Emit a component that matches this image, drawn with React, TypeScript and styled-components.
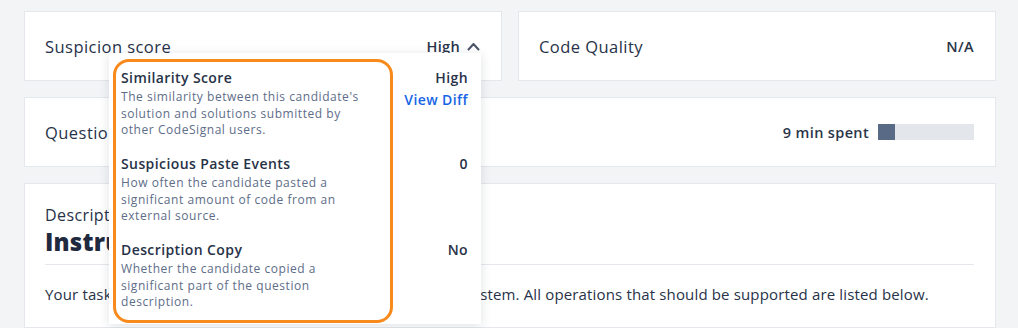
import React from "react";
import styled, { createGlobalStyle } from "styled-components";

const Global = createGlobalStyle`
  html, body { margin: 0; padding: 0; background: #f3f4f6; }
  body { font-family: "Open Sans", "Liberation Sans", sans-serif; color: #273248; }
  * { box-sizing: border-box; }
`;

const Page = styled.div`
  width: 1018px;
  height: 328px;
  overflow: hidden;
  padding: 11px 22px 0 24px;
  display: flex;
  flex-direction: column;
  gap: 16px;
`;

const TopRow = styled.div`
  display: grid;
  grid-template-columns: 1fr 1fr;
  gap: 16px;
`;

const Card = styled.div<{ $raised?: boolean }>`
  position: relative;
  z-index: ${(p) => (p.$raised ? 5 : 1)};
  background: #fff;
  border: 1px solid #e4e7eb;
`;

const RowCard = styled(Card)`
  height: 70px;
  display: flex;
  align-items: center;
  justify-content: space-between;
  padding: 0 21px 0 20px;
`;

const Label = styled.div`
  font-size: 16.5px;
  font-weight: 500;
  color: #273248;
  letter-spacing: 0.45px;
`;

const Value = styled.div<{ $gap?: number }>`
  display: flex;
  align-items: center;
  gap: ${(p) => p.$gap ?? 7}px;
  font-size: 14.5px;
  font-weight: 600;
  letter-spacing: 0.35px;
  color: #2a3549;
`;

const Bar = styled.div`
  width: 96px;
  height: 16px;
  background: #e3e6ea;
  display: flex;
`;

const BarFill = styled.div`
  height: 100%;
  background: #586a85;
`;

const DescCard = styled(Card)`
  flex: 1;
  padding: 20px 21px 0 20px;
`;

const Overline = styled.div`
  font-size: 16px;
  line-height: 22px;
  font-weight: 500;
  letter-spacing: 0.4px;
  color: #273248;
`;

const Heading = styled.h1`
  margin: 0;
  font-size: 24px;
  line-height: 32px;
  font-weight: 800;
  letter-spacing: 0.2px;
  color: #1f2a40;
`;

const Divider = styled.hr`
  margin: 6px 0 0;
  border: none;
  border-top: 1px solid #e4e7eb;
`;

const Body = styled.p`
  margin: 18px 0 0;
  font-size: 15px;
  line-height: 22px;
  font-weight: 500;
  letter-spacing: 0.15px;
  color: #273248;
  white-space: nowrap;
`;

const Popover = styled.div`
  position: absolute;
  left: 84px;
  top: 41px;
  width: 372px;
  height: 271px;
  background: #fff;
  box-shadow: 0 2px 10px rgba(40, 50, 70, 0.14);
  padding: 14px 13px 0 12px;
  display: flex;
  flex-direction: column;
  gap: 14.5px;
`;

const Highlight = styled.div`
  position: absolute;
  left: 4px;
  top: 6px;
  width: 280px;
  height: 264px;
  border: 3.5px solid #f88a1c;
  border-radius: 16px;
  pointer-events: none;
`;

const Item = styled.div`
  display: grid;
  grid-template-columns: 252px 1fr;
`;

const ItemTitle = styled.div`
  font-size: 14px;
  line-height: 22px;
  font-weight: 600;
  letter-spacing: 0.4px;
  color: #273248;
`;

const ItemDesc = styled.div`
  font-size: 12px;
  line-height: 16.5px;
  font-weight: 500;
  color: #5d6d88;
  letter-spacing: 0.55px;
`;

const ItemValues = styled.div`
  display: flex;
  flex-direction: column;
  align-items: flex-end;
`;

const ItemValue = styled.div<{ $link?: boolean }>`
  font-size: 14px;
  line-height: 22px;
  font-weight: 600;
  letter-spacing: 0.4px;
  color: ${(p) => (p.$link ? "#1765e6" : "#273248")};
  cursor: ${(p) => (p.$link ? "pointer" : "default")};
`;

const Chevron = () => (
  <svg width="13" height="9" viewBox="0 0 13 9" fill="none">
    <polyline points="1.5,7.5 6.5,2 11.5,7.5" stroke="#4a5568" strokeWidth="2" strokeLinecap="round" strokeLinejoin="round" />
  </svg>
);

const items = [
  {
    title: "Similarity Score",
    desc: "The similarity between this candidate's solution and solutions submitted by other CodeSignal users.",
    values: [{ text: "High" }, { text: "View Diff", link: true }],
  },
  {
    title: "Suspicious Paste Events",
    desc: "How often the candidate pasted a significant amount of code from an external source.",
    values: [{ text: "0" }],
  },
  {
    title: "Description Copy",
    desc: "Whether the candidate copied a significant part of the question description.",
    values: [{ text: "No" }],
  },
];

export default function App() {
  return (
    <>
      <Global />
      <Page>
        <TopRow>
          <RowCard $raised>
            <Label>Suspicion score</Label>
            <Value>
              High <Chevron />
            </Value>
            <Popover>
              <Highlight />
              {items.map((it) => (
                <Item key={it.title}>
                  <div>
                    <ItemTitle>{it.title}</ItemTitle>
                    <ItemDesc>{it.desc}</ItemDesc>
                  </div>
                  <ItemValues>
                    {it.values.map((v) => (
                      <ItemValue key={v.text} $link={v.link}>
                        {v.text}
                      </ItemValue>
                    ))}
                  </ItemValues>
                </Item>
              ))}
            </Popover>
          </RowCard>
          <RowCard>
            <Label>Code Quality</Label>
            <Value>N/A</Value>
          </RowCard>
        </TopRow>
        <RowCard>
          <Label>Question</Label>
          <Value $gap={9}>
            9 min spent
            <Bar>
              <BarFill style={{ width: `${(9 / 50) * 100}%` }} />
            </Bar>
          </Value>
        </RowCard>
        <DescCard>
          <Overline>Description</Overline>
          <Heading>Instructions</Heading>
          <Divider />
          <Body>
            Your task is to implement a simplified version of a banking system. All operations that should be supported are listed below.
          </Body>
        </DescCard>
      </Page>
    </>
  );
}
